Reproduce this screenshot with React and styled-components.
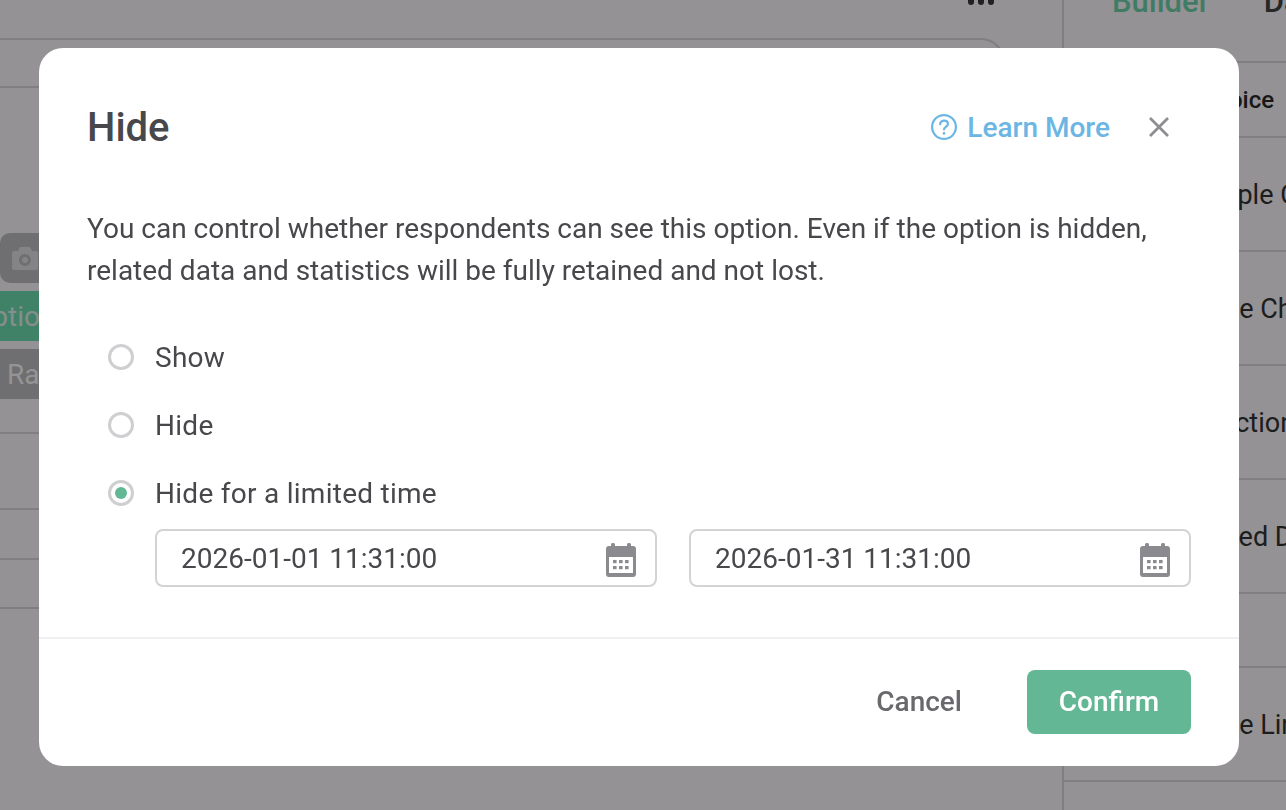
import React from "react"
import styled, { createGlobalStyle } from "styled-components"

const GlobalStyle = createGlobalStyle`
  html, body {
    margin: 0;
    padding: 0;
    height: 100%;
    overflow: hidden;
    font-family: Roboto, "Liberation Sans", sans-serif;
  }
  * { box-sizing: border-box; }
`

const Page = styled.div`
  width: 1286px;
  height: 810px;
  display: grid;
  grid-template-columns: 1062px 224px;
  background: #fffcff;
  overflow: hidden;
`

const Main = styled.main`
  padding-top: 38px;
  position: relative;
`

const MoreDots = styled.div`
  position: absolute;
  top: 0;
  left: 968px;
  display: flex;
  gap: 4px;
  span {
    width: 6px;
    height: 5px;
    border-radius: 0 0 3px 3px;
    background: #3a3a3e;
  }
`

const Card = styled.section`
  width: 1005px;
  height: 600px;
  border-top: 2px solid #dcd9df;
  border-right: 2px solid #dcd9df;
  border-top-right-radius: 24px;
`

const CardHead = styled.div`
  height: 48px;
  border-bottom: 2px solid #dcd9df;
`

const ChipStack = styled.div`
  display: flex;
  flex-direction: column;
  gap: 8px;
  padding-top: 145px;
  width: 160px;
`

const Chip = styled.div`
  height: 50px;
  display: flex;
  align-items: center;
  font-size: 28px;
  white-space: nowrap;
  overflow: hidden;
  color: ${p => (p.$green ? "#e6f5ee" : "#fff")};
  background: ${p => (p.$green ? "#6ee0b4" : "#c0bdc3")};
  border-radius: ${p => (p.$round ? "10px 0 0 10px" : "0")};
`

const ChipLabel = styled.span`
  display: flex;
  flex: none;
  margin-left: ${p => p.$offset}px;
`

const FieldRows = styled.div`
  margin-top: 33px;
  border-top: 2px solid #dcd9df;
`

const FieldRow = styled.div`
  height: ${p => p.$h}px;
  border-bottom: 2px solid #dcd9df;
`

const Sidebar = styled.aside`
  border-left: 2px solid #dcd9df;
`

const Tabs = styled.div`
  height: 63px;
  border-bottom: 2px solid #dcd9df;
  display: flex;
  gap: 54px;
  padding-left: 48px;
  overflow: hidden;
`

const Tab = styled.div`
  margin-top: -17px;
  font-size: 31px;
  font-weight: 500;
  color: ${p => (p.$active ? "#6fd6ae" : "#444")};
`

const GroupTitle = styled.div`
  height: 75px;
  display: flex;
  align-items: center;
  padding-left: 136px;
  font-size: 24px;
  font-weight: 500;
  color: #2a2a2a;
  border-bottom: 2px solid #dcd9df;
  white-space: nowrap;
`

const ToolRow = styled.div`
  height: ${p => p.$h}px;
  padding: 2px 0 0 ${p => p.$indent}px;
  display: flex;
  align-items: center;
  font-size: 27px;
  color: #333;
  border-bottom: 2px solid #dcd9df;
  white-space: nowrap;
  overflow: hidden;
`

const Overlay = styled.div`
  position: fixed;
  inset: 0;
  background: rgba(0, 0, 0, 0.42);
`

const Modal = styled.div`
  position: fixed;
  left: 39px;
  top: 48px;
  width: 1200px;
  height: 718px;
  background: #fff;
  border-radius: 24px;
  display: flex;
  flex-direction: column;
  color: #48474b;
`

const Header = styled.header`
  height: 160px;
  padding: 0 69px 2px 48px;
  display: flex;
  align-items: center;
  justify-content: space-between;
`

const Title = styled.h2`
  margin: 0;
  font-size: 40px;
  font-weight: 500;
  color: #48474b;
`

const HeaderActions = styled.div`
  display: flex;
  align-items: center;
`

const LearnMore = styled.a`
  display: flex;
  align-items: center;
  gap: 10px;
  color: #6bb6e4;
  font-size: 28px;
  font-weight: 500;
`

const CloseButton = styled.button`
  margin-left: 38px;
  padding: 0;
  width: 22px;
  height: 22px;
  border: 0;
  background: none;
  display: flex;
  color: #8e8d91;
`

const Body = styled.div`
  flex: 1;
  padding: 0 48px;
`

const Intro = styled.p`
  margin: 0;
  font-size: 28px;
  line-height: 42px;
`

const RadioGroup = styled.div`
  padding: 45px 0 0 21px;
  display: flex;
  flex-direction: column;
  gap: 28px;
`

const RadioRow = styled.label`
  height: 40px;
  display: flex;
  align-items: center;
  gap: 21px;
  font-size: 28px;
  letter-spacing: 0.27px;
`

const RadioDot = styled.span`
  width: 26px;
  height: 26px;
  flex: none;
  border-radius: 50%;
  border: 3px solid #cfced1;
  display: flex;
  align-items: center;
  justify-content: center;
  &::after {
    content: "";
    display: ${p => (p.$checked ? "block" : "none")};
    width: 12px;
    height: 12px;
    border-radius: 50%;
    background: #64b795;
  }
`

const DateRow = styled.div`
  margin: 16px 0 0 68px;
  display: flex;
  gap: 32px;
`

const DateField = styled.div`
  width: 502px;
  height: 58px;
  padding: 0 19px 0 24px;
  border: 2px solid #d3d2d5;
  border-radius: 8px;
  display: flex;
  align-items: center;
  justify-content: space-between;
  font-size: 28px;
  svg {
    margin-top: 4px;
  }
`

const Footer = styled.footer`
  height: 129px;
  border-top: 2px solid #f0eff2;
  padding: 31px 48px 0 0;
  display: flex;
  justify-content: flex-end;
  gap: 65px;
`

const CancelButton = styled.button`
  height: 64px;
  padding: 0 0 2px;
  border: 0;
  background: none;
  font: 500 28px Roboto, sans-serif;
  color: #69686c;
`

const ConfirmButton = styled.button`
  width: 164px;
  height: 64px;
  padding: 0 0 2px;
  border: 0;
  border-radius: 8px;
  background: #64b795;
  color: #fff;
  font: 500 28px Roboto, sans-serif;
`

const QuestionIcon = () => (
  <svg width="26" height="26" viewBox="0 0 26 26" fill="none" stroke="#6bb6e4" strokeWidth="2.2" strokeLinecap="round">
    <circle cx="13" cy="13" r="11.9" />
    <path d="M9.2 10.2c0-2.2 1.7-3.6 3.9-3.6s3.8 1.4 3.8 3.3c0 2.8-3.9 3-3.9 5.6" />
    <path d="M13 19.3v.2" strokeWidth="2.6" />
  </svg>
)

const CloseIcon = () => (
  <svg width="22" height="22" viewBox="0 0 22 22" fill="none" stroke="currentColor" strokeWidth="2.8">
    <path d="M2 2l18 18M20 2L2 20" />
  </svg>
)

const CalendarIcon = () => (
  <svg width="30" height="34" viewBox="0 0 30 34" fill="#8b8a8e">
    <rect x="5" y="0" width="4" height="6" rx="1.5" />
    <rect x="21" y="0" width="4" height="6" rx="1.5" />
    <rect x="0" y="3" width="30" height="31" rx="3" />
    <rect x="3" y="14" width="24" height="16" fill="#fff" />
    {[7, 13, 19].map(x => [17, 23].map(y => <rect key={`${x}-${y}`} x={x} y={y} width="3.6" height="3.2" />))}
  </svg>
)

const CameraIcon = () => (
  <svg width="26" height="24" viewBox="0 0 26 24" fill="#e4e2e6">
    <path fillRule="evenodd" d="M8 1h10l2 4h4a2 2 0 0 1 2 2v15a2 2 0 0 1-2 2H2a2 2 0 0 1-2-2V7a2 2 0 0 1 2-2h4zM13 8a6 6 0 1 0 0 12a6 6 0 0 0 0-12zm0 3a3 3 0 1 1 0 6a3 3 0 0 1 0-6z" />
  </svg>
)

const tools = [
  { label: "Multiple Choice", indent: 113, h: 114 },
  { label: "Single Choice", indent: 116, h: 114 },
  { label: "Selection", indent: 120, h: 114 },
  { label: "Fixed Data", indent: 140, h: 114 },
  { label: "", indent: 0, h: 74 },
  { label: "Single Line", indent: 116, h: 114 },
]

const DATES = ["2026-01-01 11:31:00", "2026-01-31 11:31:00"]

export default function App() {
  return (
    <>
      <GlobalStyle />
      <Page>
        <Main>
          <MoreDots><span /><span /><span /></MoreDots>
          <Card>
            <CardHead />
            <ChipStack>
              <Chip $round><ChipLabel $offset={12}><CameraIcon /></ChipLabel></Chip>
              <Chip $green><ChipLabel $offset={-27}>Option</ChipLabel></Chip>
              <Chip><ChipLabel $offset={7}>Rating</ChipLabel></Chip>
            </ChipStack>
            <FieldRows>
              <FieldRow $h={76} />
              <FieldRow $h={50} />
              <FieldRow $h={49} />
            </FieldRows>
          </Card>
        </Main>
        <Sidebar>
          <Tabs>
            <Tab $active>Builder</Tab>
            <Tab>Data</Tab>
          </Tabs>
          <GroupTitle>Choice</GroupTitle>
          {tools.map((t, i) => (
            <ToolRow key={i} $h={t.h} $indent={t.indent}>{t.label}</ToolRow>
          ))}
        </Sidebar>
      </Page>
      <Overlay />
      <Modal>
        <Header>
          <Title>Hide</Title>
          <HeaderActions>
            <LearnMore><QuestionIcon />Learn More</LearnMore>
            <CloseButton><CloseIcon /></CloseButton>
          </HeaderActions>
        </Header>
        <Body>
          <Intro>
            You can control whether respondents can see this option. Even if the option is hidden,
            <br />
            related data and statistics will be fully retained and not lost.
          </Intro>
          <RadioGroup>
            <RadioRow><RadioDot />Show</RadioRow>
            <RadioRow><RadioDot />Hide</RadioRow>
            <RadioRow><RadioDot $checked />Hide for a limited time</RadioRow>
          </RadioGroup>
          <DateRow>
            {DATES.map(d => (
              <DateField key={d}>{d}<CalendarIcon /></DateField>
            ))}
          </DateRow>
        </Body>
        <Footer>
          <CancelButton>Cancel</CancelButton>
          <ConfirmButton>Confirm</ConfirmButton>
        </Footer>
      </Modal>
    </>
  )
}
